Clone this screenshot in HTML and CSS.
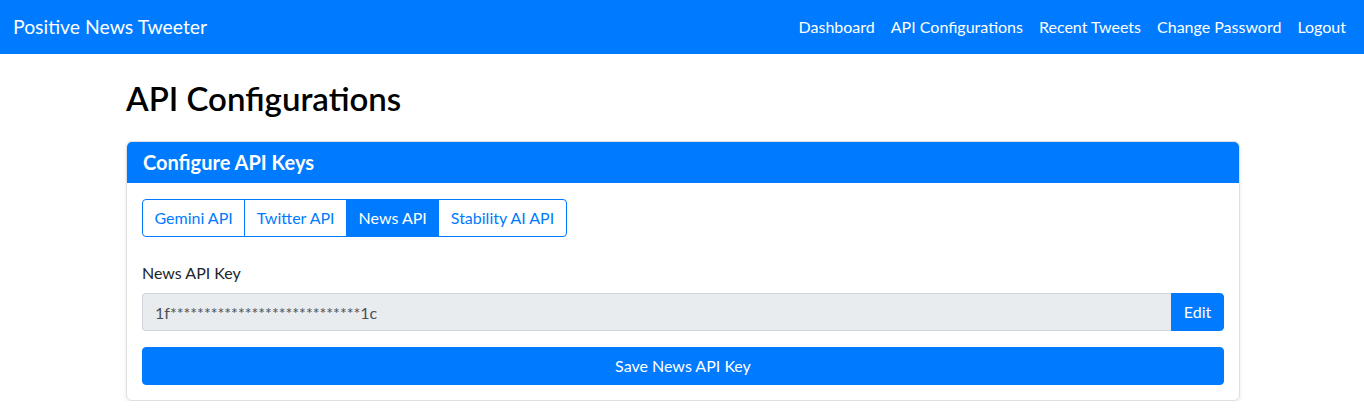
FILE: index.html
```html
<!DOCTYPE html>
<html lang="en">
<head>
<meta charset="utf-8">
<title>API Configurations</title>
<link rel="stylesheet" href="styles.css">
</head>
<body>
<nav class="navbar">
  <a class="brand" href="#">Positive News Tweeter</a>
  <ul class="nav">
    <li><a href="#">Dashboard</a></li>
    <li><a href="#">API Configurations</a></li>
    <li><a href="#">Recent Tweets</a></li>
    <li><a href="#">Change Password</a></li>
    <li><a href="#">Logout</a></li>
  </ul>
</nav>
<main class="container">
  <h2 class="title">API Configurations</h2>
  <section class="card">
    <div class="card-header"><h5>Configure API Keys</h5></div>
    <div class="card-body">
      <div class="tabs">
        <button class="tab">Gemini API</button>
        <button class="tab">Twitter API</button>
        <button class="tab active">News API</button>
        <button class="tab">Stability AI API</button>
      </div>
      <label class="label" for="key">News API Key</label>
      <div class="input-group">
        <input id="key" class="input" type="text" readonly value="1f****************************1c">
        <button class="btn-edit">Edit</button>
      </div>
      <button class="btn-save">Save News API Key</button>
    </div>
  </section>
</main>
</body>
</html>
```
FILE: styles.css
```css
* { box-sizing: border-box; }
body {
  margin: 0;
  font-family: "Lato", "Liberation Sans", sans-serif;
  font-size: 16px;
  line-height: 1.5;
  color: #212529;
  background: #fff;
}
.navbar {
  height: 54px;
  background: #007bff;
  display: flex;
  align-items: center;
  justify-content: space-between;
  padding: 0 10px 0 13px;
}
.brand {
  color: #fff;
  text-decoration: none;
  font-size: 19.4px;
  line-height: 30px;
}
.nav {
  list-style: none;
  margin: 0;
  padding: 0;
  display: flex;
}
.nav a {
  display: block;
  color: #fff;
  text-decoration: none;
  padding: 0 8px;
  line-height: 24px;
}
.container {
  width: 1114px;
  margin: 0 0 0 126px;
  padding-top: 25px;
}
.title {
  margin: 0 0 24px;
  font-size: 33px;
  font-weight: 600;
  line-height: 38px;
  color: #000;
}
.card {
  border: 1px solid rgba(0,0,0,.125);
  border-radius: 6px;
  box-shadow: 0 2px 4px rgba(0,0,0,.08);
  overflow: hidden;
}
.card-header {
  background: #007bff;
  padding: 9px 16px;
}
.card-header h5 {
  margin: 0;
  color: #fff;
  font-size: 20px;
  font-weight: 700;
  line-height: 23px;
}
.card-body {
  padding: 16px 15px 15px;
}
.tabs {
  display: inline-flex;
  margin-bottom: 24px;
}
.tab {
  font: inherit;
  height: 38px;
  padding: 0 11.5px;
  background: #fff;
  color: #007bff;
  border: 1px solid #007bff;
  margin-left: -1px;
}
.tab:first-child { margin-left: 0; border-radius: 4px 0 0 4px; }
.tab:last-child { border-radius: 0 4px 4px 0; }
.tab.active { background: #007bff; color: #fff; }
.label {
  display: block;
  margin-bottom: 8px;
  line-height: 24px;
}
.input-group {
  display: flex;
  margin-bottom: 16px;
}
.input {
  flex: 1;
  height: 38px;
  font: inherit;
  color: #495057;
  background: #e9ecef;
  border: 1px solid #ced4da;
  border-right: 0;
  border-radius: 4px 0 0 4px;
  padding: 0 12px;
}
.btn-edit {
  font: inherit;
  height: 38px;
  width: 53px;
  background: #007bff;
  color: #fff;
  border: 1px solid #007bff;
  border-radius: 0 4px 4px 0;
}
.btn-save {
  display: block;
  width: 100%;
  height: 38px;
  font: inherit;
  background: #007bff;
  color: #fff;
  border: 1px solid #007bff;
  border-radius: 4px;
}
```
